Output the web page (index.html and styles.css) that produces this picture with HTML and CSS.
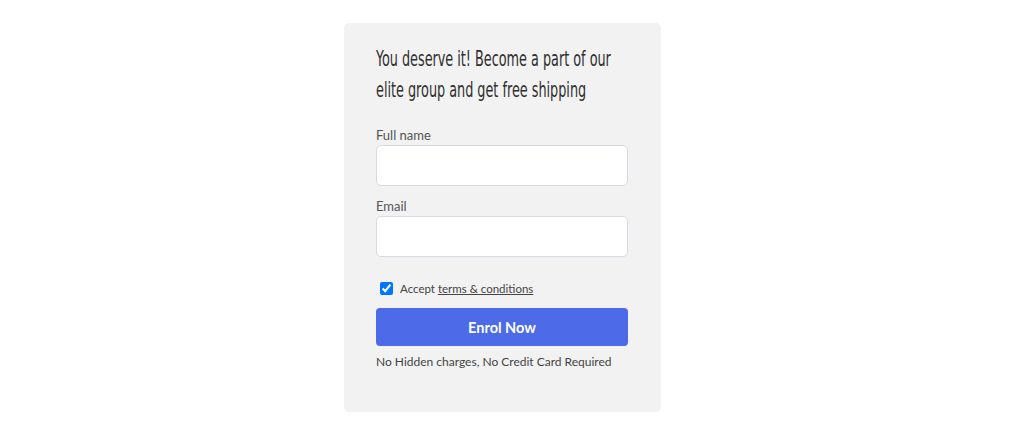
FILE: index.html
```html
<!DOCTYPE html>
<html lang="en">
<head>
  <meta charset="UTF-8">
  <meta name="viewport" content="width=device-width, initial-scale=1.0">
  <title>Join the elite group</title>
  <link rel="stylesheet" href="styles.css">
</head>
<body>
  <main class="page">
    <form class="signup-card" onsubmit="return false">
      <h2 class="signup-title">You deserve it! Become a part of our<br>elite group and get free shipping</h2>
      <label class="field">
        <span class="field-label">Full name</span>
        <input type="text" class="field-input">
      </label>
      <label class="field">
        <span class="field-label">Email</span>
        <input type="email" class="field-input">
      </label>
      <label class="terms">
        <input type="checkbox" checked>
        <span>Accept <a href="#" class="terms-link">terms &amp; conditions</a></span>
      </label>
      <button type="submit" class="enrol-btn">Enrol Now</button>
      <p class="note">No Hidden charges, No Credit Card Required</p>
    </form>
  </main>
</body>
</html>
```

FILE: styles.css
```css
* { box-sizing: border-box; }
body {
  margin: 0;
  background: #fff;
  font-family: 'Lato', 'Noto Sans', sans-serif;
  color: #333;
}
.page {
  display: flex;
  justify-content: center;
  padding: 23px 19px 0 0;
}
.signup-card {
  width: 317px;
  background: #f2f2f2;
  border-radius: 5px;
  padding: 20px 33px 41px 32px;
  display: flex;
  flex-direction: column;
}
/* condensed headline: no narrow face installed, so squeeze a condensed one */
.signup-title {
  margin: 0 0 21px;
  align-self: flex-start;
  white-space: nowrap;
  font-family: 'DejaVu Sans Condensed', 'DejaVu Sans', sans-serif;
  font-weight: normal;
  font-size: 22px;
  line-height: 31px;
  color: #2f2f2f;
  transform: scaleX(0.647);
  transform-origin: left top;
}
.field {
  display: flex;
  flex-direction: column;
  margin-bottom: 11px;
}
.field-label {
  font-size: 13px;
  line-height: 18px;
  color: #555;
  margin-bottom: 1px;
}
.field-input {
  height: 41px;
  border: 1px solid #d6dbe3;
  border-radius: 5px;
  background: #fff;
  font: inherit;
  padding: 0 10px;
}
.terms {
  display: flex;
  align-items: center;
  margin: 10px 0;
  height: 20px;
  font-size: 11.5px;
  color: #444;
}
.terms input {
  margin: 0 7px 0 4px;
  width: 13px;
  height: 13px;
}
.terms-link {
  color: #444;
}
.enrol-btn {
  height: 38px;
  border: none;
  border-radius: 4px;
  background: #4d6be8;
  color: #fff;
  font-family: inherit;
  font-size: 14.5px;
  font-weight: bold;
  cursor: pointer;
}
.note {
  margin: 7px 0 0;
  font-size: 12px;
  line-height: 18px;
  color: #444;
}
```
